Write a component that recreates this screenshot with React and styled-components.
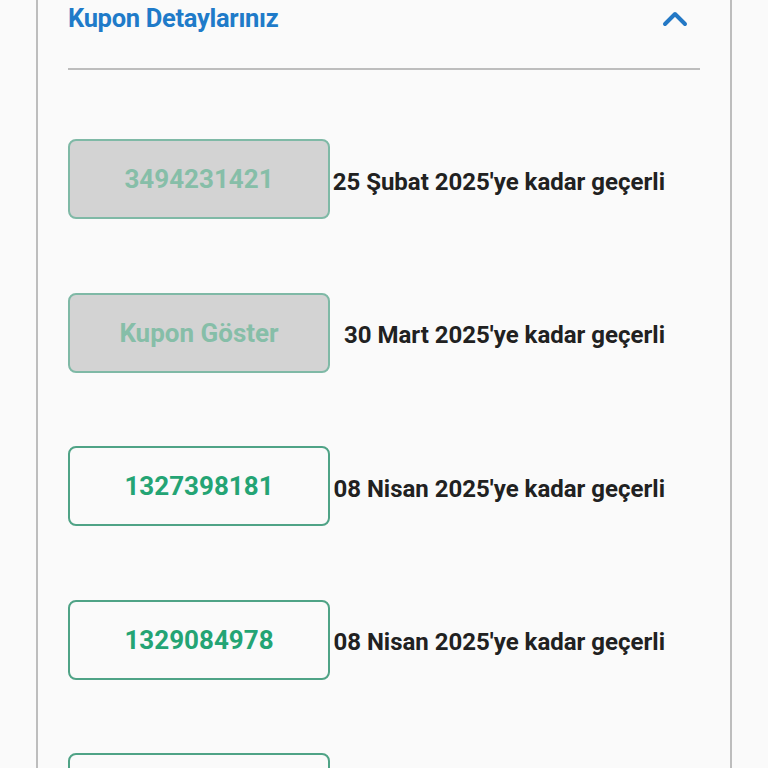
import React from "react";
import styled, { createGlobalStyle } from "styled-components";

const GlobalStyle = createGlobalStyle`
  html, body {
    margin: 0;
    padding: 0;
    background: #fafafa;
    font-family: Roboto, "Noto Sans", sans-serif;
  }
`;

const Page = styled.div`
  padding: 0 36px;
`;

const Card = styled.section`
  border-left: 2px solid #bdbdbd;
  border-right: 2px solid #bdbdbd;
  background: #fafafa;
  padding: 0 30px;
  min-height: 800px;
`;

const Header = styled.div`
  display: flex;
  align-items: center;
  justify-content: space-between;
  height: 36px;
  padding-bottom: 32px;
  border-bottom: 2px solid #bdbdbd;
`;

const Title = styled.h2`
  margin: 0;
  font-size: 25.5px;
  font-weight: 700;
  color: #1f7bc9;
  letter-spacing: -0.3px;
`;

const Toggle = styled.button`
  border: 0;
  background: none;
  padding: 0;
  margin-right: 12px;
  display: flex;
  color: #2378c5;
`;

const List = styled.div`
  display: flex;
  flex-direction: column;
  gap: 73.5px;
  padding-top: 69px;
`;

const Row = styled.div`
  display: flex;
  align-items: center;
  justify-content: space-between;
  padding-right: 35px;
`;

const CodeButton = styled.button`
  box-sizing: border-box;
  width: 262px;
  height: 80px;
  border: 2px solid ${(p) => (p.$used ? "#7fb9a6" : "#4fa386")};
  border-radius: 8px;
  background: ${(p) => (p.$used ? "#d3d3d3" : "#fafafa")};
  color: ${(p) => (p.$used ? "#86bea8" : "#24a474")};
  font-family: Roboto, "Noto Sans", sans-serif;
  font-size: 26px;
  font-weight: 700;
  cursor: pointer;
`;

const Expiry = styled.span`
  padding-top: 5px;
  font-size: 24px;
  font-weight: 700;
  color: #212121;
`;

const coupons = [
  { code: "3494231421", date: "25 Şubat 2025'ye kadar geçerli", used: true },
  { code: "Kupon Göster", date: "30 Mart 2025'ye kadar geçerli", used: true },
  { code: "1327398181", date: "08 Nisan 2025'ye kadar geçerli" },
  { code: "1329084978", date: "08 Nisan 2025'ye kadar geçerli" },
  { code: "1330012457", date: "08 Nisan 2025'ye kadar geçerli" },
];

export default function App() {
  return (
    <>
      <GlobalStyle />
      <Page>
        <Card>
          <Header>
            <Title>Kupon Detaylarınız</Title>
            <Toggle aria-label="Kapat">
              <svg width="26" height="18" viewBox="0 0 26 18">
                <path
                  d="M3 15 L13 5 L23 15"
                  fill="none"
                  stroke="currentColor"
                  strokeWidth="4"
                  strokeLinecap="round"
                  strokeLinejoin="round"
                />
              </svg>
            </Toggle>
          </Header>
          <List>
            {coupons.map((c, i) => (
              <Row key={i}>
                <CodeButton $used={c.used}>{c.code}</CodeButton>
                <Expiry>{c.date}</Expiry>
              </Row>
            ))}
          </List>
        </Card>
      </Page>
    </>
  );
}
